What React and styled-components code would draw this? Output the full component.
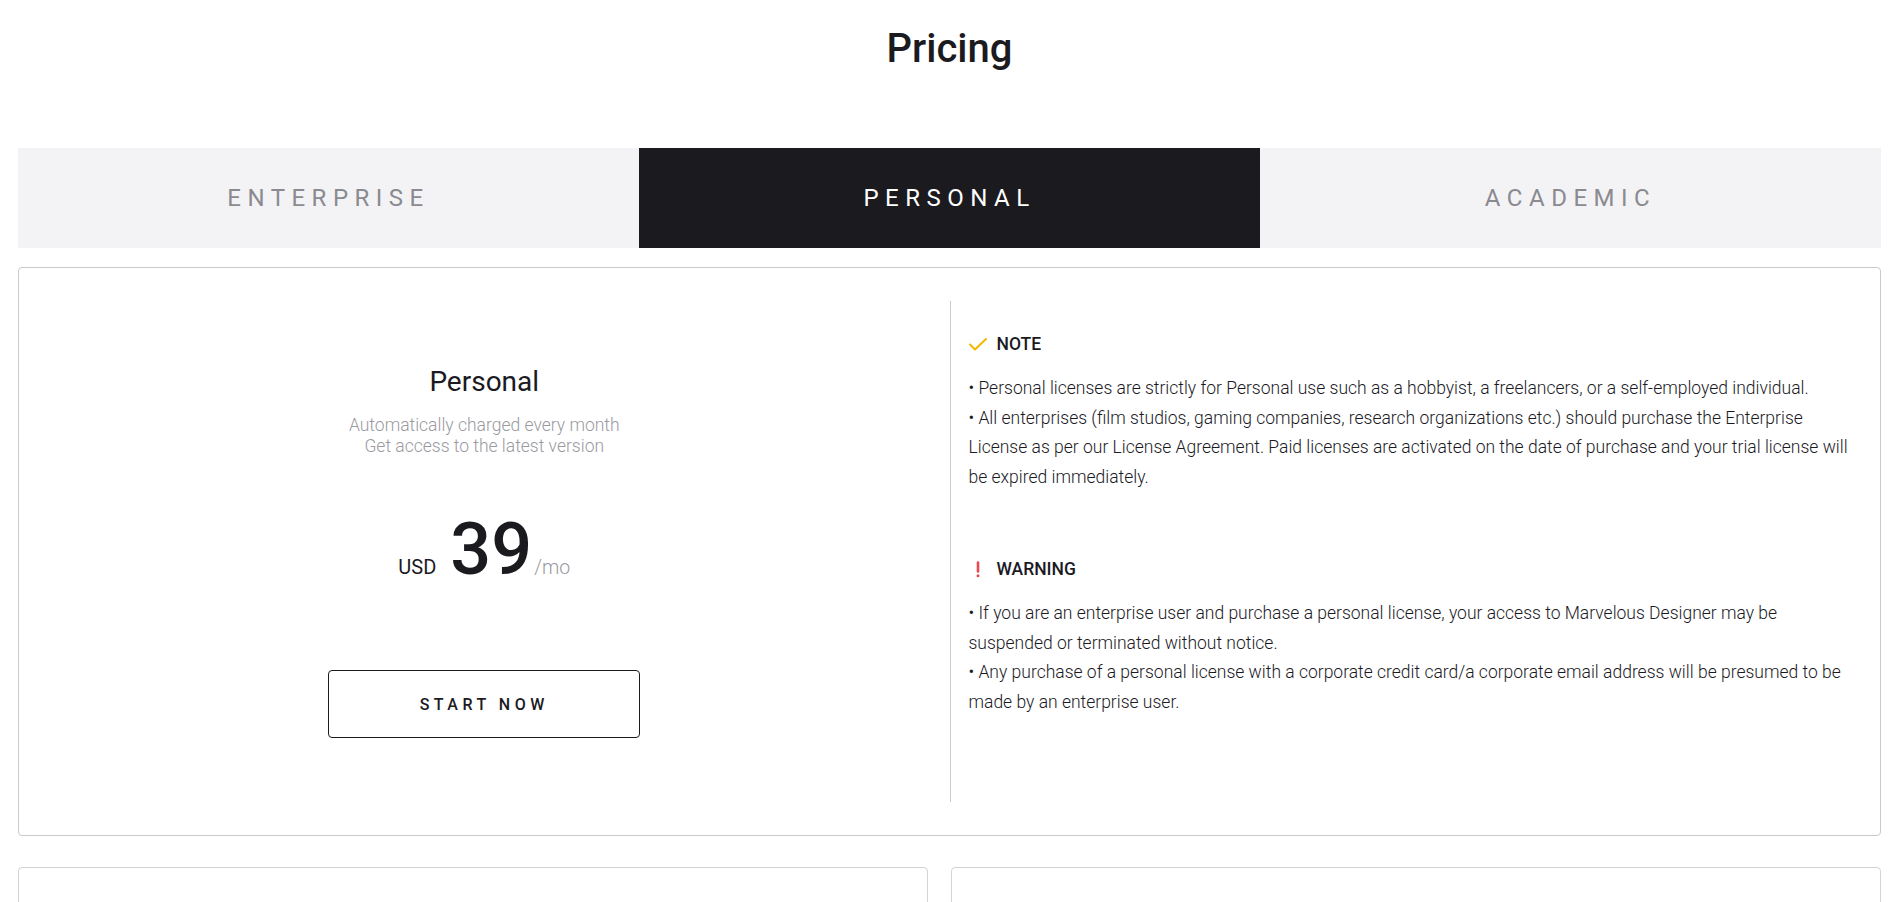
import React from "react";
import styled, { createGlobalStyle } from "styled-components";

const GlobalStyle = createGlobalStyle`
  html, body {
    margin: 0;
    padding: 0;
    background: #fff;
  }
  body {
    font-family: Roboto, "Noto Sans", Arial, sans-serif;
    color: #1b1a1f;
  }
  * {
    box-sizing: border-box;
  }
`;

const Page = styled.div`
  padding: 25px 17px 40px 18px;
`;

const Title = styled.h1`
  margin: 0;
  font-size: 40px;
  line-height: 48px;
  font-weight: 500;
  text-align: center;
  color: #1b1a1f;
`;

const Tabs = styled.div`
  display: grid;
  grid-template-columns: repeat(3, 1fr);
  margin-top: 75px;
`;

const Tab = styled.button`
  height: 100px;
  margin: 0;
  padding: 0;
  border: 0;
  font-family: inherit;
  font-size: 24px;
  font-weight: 400;
  letter-spacing: 6.5px;
  cursor: pointer;
  background: ${(p) => (p.$active ? "#1b1a1f" : "#f3f3f5")};
  color: ${(p) => (p.$active ? "#ffffff" : "#8a8a90")};
`;

const PlanCard = styled.section`
  display: grid;
  grid-template-columns: 1fr 1fr;
  margin-top: 19px;
  padding: 33px 0;
  border: 1px solid #c9c9d0;
  border-radius: 4px;
`;

const PlanSummary = styled.div`
  display: flex;
  flex-direction: column;
  align-items: center;
  justify-content: center;
  text-align: center;
`;

const PlanName = styled.h2`
  margin: 0;
  font-size: 28px;
  line-height: 34px;
  font-weight: 400;
  color: #1b1a1f;
`;

const PlanDesc = styled.p`
  margin: 16px 0 0;
  font-size: 17.5px;
  line-height: 21px;
  font-weight: 300;
  color: #9a9a9f;
`;

const Price = styled.div`
  display: flex;
  align-items: baseline;
  margin-top: 57px;
`;

const Currency = styled.span`
  font-size: 20px;
  margin-right: 14px;
  color: #1b1a1f;
`;

const Amount = styled.span`
  font-size: 72px;
  line-height: 72px;
  font-weight: 500;
  color: #1b1a1f;
`;

const Per = styled.span`
  font-size: 19.5px;
  font-weight: 300;
  margin-left: 2px;
  color: #9a9a9f;
`;

const StartButton = styled.button`
  margin-top: 84px;
  width: 312px;
  height: 68px;
  border: 1.5px solid #1b1a1f;
  border-radius: 4px;
  background: #fff;
  font-family: inherit;
  font-size: 16px;
  font-weight: 500;
  letter-spacing: 4.5px;
  color: #1b1a1f;
  cursor: pointer;
`;

const PlanNotes = styled.div`
  min-height: 501px;
  padding: 33px 30px 0 18px;
  border-left: 1px solid #c9c9d0;
`;

const NoteBlock = styled.div`
  & + & {
    margin-top: 66px;
  }
`;

const NoteHead = styled.div`
  display: flex;
  align-items: center;
  font-size: 17.5px;
  line-height: 21px;
  font-weight: 500;
  color: #1b1a1f;
`;

const NoteIcon = styled.span`
  display: flex;
  justify-content: center;
  width: 18px;
  margin-right: 10px;
`;

const NoteText = styled.p`
  margin: 19px 0 0;
  font-size: 17.5px;
  line-height: 29.7px;
  font-weight: 300;
  color: #1b1a1f;
`;

const NoteLine = styled.span`
  display: block;
`;

const MoreCards = styled.div`
  display: grid;
  grid-template-columns: 910px 1fr;
  gap: 23px;
  margin-top: 31px;
`;

const MiniCard = styled.div`
  height: 380px;
  border: 1px solid #d2d2d8;
  border-radius: 4px;
`;

const CheckIcon = () => (
  <svg width="18" height="13" viewBox="0 0 18 13" fill="none">
    <path
      d="M1 6.5 L6 11.5 L17 1"
      stroke="#f5b800"
      strokeWidth="2"
      strokeLinecap="round"
      strokeLinejoin="round"
    />
  </svg>
);

const AlertIcon = () => (
  <svg width="6" height="17" viewBox="0 0 6 17" fill="none">
    <path d="M3 1.5 L3 10.5" stroke="#e84a52" strokeWidth="2.6" strokeLinecap="round" />
    <circle cx="3" cy="14.8" r="1.5" fill="#e84a52" />
  </svg>
);

const tabs = ["ENTERPRISE", "PERSONAL", "ACADEMIC"];

export default function App() {
  return (
    <>
      <GlobalStyle />
      <Page>
        <Title>Pricing</Title>

        <Tabs>
          {tabs.map((t) => (
            <Tab key={t} $active={t === "PERSONAL"}>
              {t}
            </Tab>
          ))}
        </Tabs>

        <PlanCard>
          <PlanSummary>
            <PlanName>Personal</PlanName>
            <PlanDesc>
              Automatically charged every month
              <br />
              Get access to the latest version
            </PlanDesc>
            <Price>
              <Currency>USD</Currency>
              <Amount>39</Amount>
              <Per>/mo</Per>
            </Price>
            <StartButton>START NOW</StartButton>
          </PlanSummary>

          <PlanNotes>
            <NoteBlock>
              <NoteHead>
                <NoteIcon>
                  <CheckIcon />
                </NoteIcon>
                NOTE
              </NoteHead>
              <NoteText>
                <NoteLine>
                  • Personal licenses are strictly for Personal use such as a hobbyist, a
                  freelancers, or a self-employed individual.
                </NoteLine>
                <NoteLine>
                  • All enterprises (film studios, gaming companies, research organizations
                  etc.) should purchase the Enterprise License as per our License Agreement.
                  Paid licenses are activated on the date of purchase and your trial license
                  will be expired immediately.
                </NoteLine>
              </NoteText>
            </NoteBlock>

            <NoteBlock>
              <NoteHead>
                <NoteIcon>
                  <AlertIcon />
                </NoteIcon>
                WARNING
              </NoteHead>
              <NoteText>
                <NoteLine>
                  • If you are an enterprise user and purchase a personal license, your
                  access to Marvelous Designer may be suspended or terminated without notice.
                </NoteLine>
                <NoteLine>
                  • Any purchase of a personal license with a corporate credit card/a
                  corporate email address will be presumed to be made by an enterprise user.
                </NoteLine>
              </NoteText>
            </NoteBlock>
          </PlanNotes>
        </PlanCard>

        <MoreCards>
          <MiniCard />
          <MiniCard />
        </MoreCards>
      </Page>
    </>
  );
}
